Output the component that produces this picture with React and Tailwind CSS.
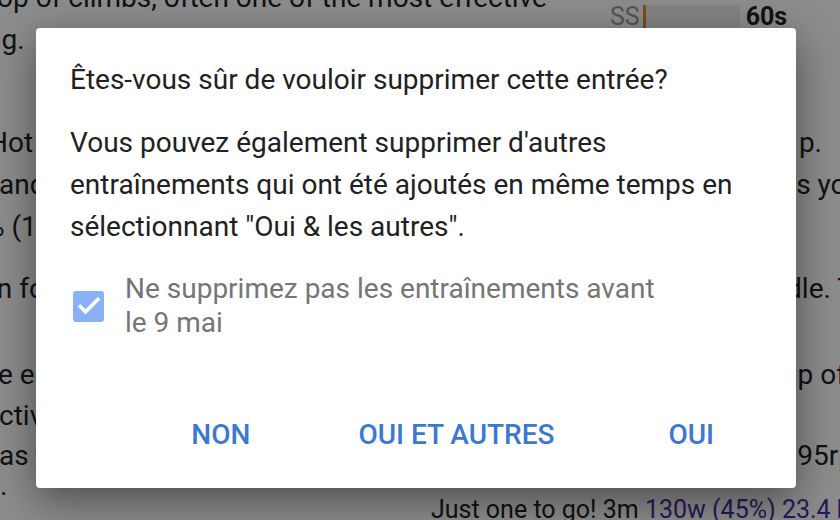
export default function App() {
  return (
    <div className="relative w-[840px] h-[520px] overflow-hidden bg-white text-[#222] font-['Roboto',sans-serif]">
      {/* background page */}
      <div className="flex flex-col text-[28px] leading-[40px]">
        <div className="h-[20px] whitespace-nowrap leading-[20px] -translate-y-[12px] -ml-[3px]">op of climbs, often one of the most effective</div>
        <div className="h-[40px] whitespace-nowrap -ml-[14px] leading-[40px]">ng.</div>
        <div className="h-[62px]" />
        <div className="flex justify-between h-[42px] leading-[42px] whitespace-nowrap">
          <span className="-ml-[12px]">Hot</span><span className="mr-[18px]">p.</span>
        </div>
        <div className="flex justify-between h-[42px] leading-[42px] whitespace-nowrap">
          <span className="-ml-[1px]">and</span><span className="-mr-[22px]">s you</span>
        </div>
        <div className="flex justify-between h-[42px] leading-[42px] whitespace-nowrap">
          <span className="-ml-[16px]">% (1</span><span></span>
        </div>
        <div className="flex justify-between h-[62px] items-end leading-[42px] whitespace-nowrap">
          <span className="-ml-[10px]">in fo</span><span className="-mr-[14px]">ddle. T</span>
        </div>
        <div className="h-[44px]" />
        <div className="flex justify-between h-[42px] leading-[42px] whitespace-nowrap">
          <span className="-ml-[2px]">e e</span><span className="-mr-[6px]">up of</span>
        </div>
        <div className="flex justify-between h-[40px] leading-[40px] whitespace-nowrap">
          <span className="-ml-[1px]">ctiv</span><span></span>
        </div>
        <div className="flex justify-between h-[40px] leading-[40px] whitespace-nowrap">
          <span className="-ml-[1px]">as t</span><span className="-mr-[14px]">95rp</span>
        </div>
        <div className="flex h-[36px] leading-[36px] whitespace-nowrap">
          <span>·</span>
        </div>
      </div>
      <div className="absolute left-[431px] top-[495px] whitespace-nowrap text-[25px] leading-[30px]">
        <span className="text-[#222]">Just one to go! 3m </span>
        <span className="text-[#4a2fa0]">130w (45%) 23.4 kJ</span>
      </div>
      <div className="absolute left-[610px] top-[4px] flex items-center h-[26px]">
        <span className="text-[25px] leading-[26px] text-[#999]">SS</span>
        <div className="ml-[3px] w-[97px] h-[24px] bg-[#eeeeee] flex">
          <div className="w-[3px] h-full bg-[#e08a2c]" />
        </div>
        <span className="ml-[6px] text-[25px] leading-[26px] font-bold text-[#222]">60s</span>
      </div>

      {/* overlay */}
      <div className="absolute inset-0 bg-black/[0.45]" />

      {/* dialog */}
      <div className="absolute left-[36px] top-[28px] w-[760px] h-[460px] bg-white rounded-[4px] shadow-[0_12px_40px_rgba(0,0,0,0.45)] flex flex-col px-[34px] pt-[35px]">
        <div className="text-[28px] leading-[34px] text-[#212121]">Êtes-vous sûr de vouloir supprimer cette entrée?</div>
        <div className="mt-[25px] text-[28px] leading-[42px] text-[#212121] w-[672px]">
          Vous pouvez également supprimer d'autres entraînements qui ont été ajoutés en même temps en sélectionnant "Oui &amp; les autres".
        </div>
        <div className="mt-[24px] flex items-center">
          <div className="ml-[3px] w-[31px] h-[31px] rounded-[3px] bg-[#8ab0f7] flex items-center justify-center shrink-0">
            <svg width="28" height="28" viewBox="0 0 24 24" fill="none" stroke="white" strokeWidth="3.2" strokeLinecap="square">
              <path d="M4.5 12.5l4.5 4.5L19.5 6.5" />
            </svg>
          </div>
          <div className="ml-[21px] text-[28px] leading-[34px] text-[#757575] w-[540px]">
            Ne supprimez pas les entraînements avant le 9 mai
          </div>
        </div>
        <div className="flex-1" />
        <div className="flex justify-end h-[106px] items-center text-[28px] font-medium text-[#3a78d2] uppercase pr-[48px]">
          <div>Non</div>
          <div className="ml-[108px]">Oui et autres</div>
          <div className="ml-[114px]">Oui</div>
        </div>
      </div>
    </div>
  );
}
